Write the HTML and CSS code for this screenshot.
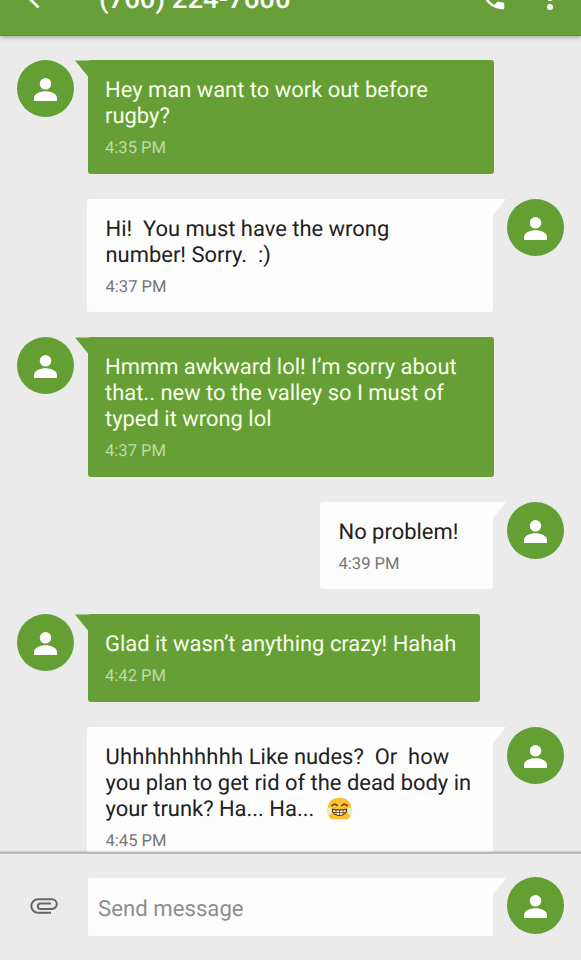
FILE: index.html
```html
<!DOCTYPE html>
<html lang="en">
<head>
    <meta charset="UTF-8">
    <title>Messages</title>
    <link rel="stylesheet" href="styles.css">
</head>
<body>
    <svg class="defs" width="0" height="0">
        <symbol id="person" viewBox="0 0 24 24">
            <circle cx="12" cy="6.1" r="6"/>
            <path d="M0 24v-3.2C0 16 6.5 13.7 12 13.7S24 16 24 20.8V24z"/>
        </symbol>
    </svg>
    <div class="app">
        <header class="toolbar">
            <svg class="back" width="24" height="24" viewBox="0 0 24 24"><path d="M12.5 2.5 3 12l9.5 9.5M3 12h20"/></svg>
            <h1>(760) 224-7600</h1>
            <svg class="phone" width="30" height="30" viewBox="0 0 24 24"><path d="M6.62 10.79c1.44 2.83 3.76 5.14 6.59 6.59l2.2-2.2c.27-.27.67-.36 1.02-.24 1.12.37 2.33.57 3.57.57.55 0 1 .45 1 1V20c0 .55-.45 1-1 1-9.39 0-17-7.61-17-17 0-.55.45-1 1-1h3.5c.55 0 1 .45 1 1 0 1.25.2 2.45.57 3.57.11.35.03.74-.25 1.02l-2.2 2.2z"/></svg>
            <svg class="more" width="8" height="26" viewBox="0 0 8 26"><circle cx="4" cy="4" r="3"/><circle cx="4" cy="13" r="3"/><circle cx="4" cy="22" r="3"/></svg>
        </header>

        <main class="messages">
            <div class="message received">
                <div class="avatar"><svg><use href="#person"/></svg></div>
                <div class="bubble">
                    <p>Hey man want to work out before<br>rugby?</p>
                    <time>4:35 PM</time>
                </div>
            </div>
            <div class="message sent">
                <div class="bubble">
                    <p>Hi!&nbsp; You must have the wrong<br>number! Sorry.&nbsp; :)</p>
                    <time>4:37 PM</time>
                </div>
                <div class="avatar"><svg><use href="#person"/></svg></div>
            </div>
            <div class="message received">
                <div class="avatar"><svg><use href="#person"/></svg></div>
                <div class="bubble">
                    <p>Hmmm awkward lol! I’m sorry about<br>that.. new to the valley so I must of<br>typed it wrong lol</p>
                    <time>4:37 PM</time>
                </div>
            </div>
            <div class="message sent">
                <div class="bubble short">
                    <p>No problem!</p>
                    <time>4:39 PM</time>
                </div>
                <div class="avatar"><svg><use href="#person"/></svg></div>
            </div>
            <div class="message received">
                <div class="avatar"><svg><use href="#person"/></svg></div>
                <div class="bubble medium">
                    <p>Glad it wasn’t anything crazy! Hahah</p>
                    <time>4:42 PM</time>
                </div>
            </div>
            <div class="message sent">
                <div class="bubble">
                    <p><span class="loose">Uhhhhhhhhhh</span> Like nudes?&nbsp; Or&nbsp; how<br>you plan to get rid of the dead body in<br>your trunk? Ha... Ha...&nbsp; <svg class="emoji" width="27" height="23" viewBox="0 0 27 23">
                        <path fill="#fbc02d" d="M1.5 13C1.500 5 6 .8 13.500.8S25.500 5 25.500 13c0 6-2.500 9.300-5 9.300h-14C4 22.300 1.500 19 1.500 13z"/>
                        <path fill="none" stroke="#5d3b12" stroke-width="1.500" stroke-linecap="round" d="M6 8.800q2.500-2.800 5.200-.3M16 8.500q2.700-2.500 5.200.3"/>
                        <path fill="#fff" stroke="#5d3b12" stroke-width="1.200" d="M6.300 12.300q7.200 1.200 14.400 0c.2 4-2.700 6.200-7.200 6.200s-7.400-2.200-7.200-6.200z"/>
                        <path fill="none" stroke="#5d3b12" stroke-width=".8" d="M10 13v5M13.500 13v5.500M17 13v5M7 15.500h13"/>
                        <path fill="#e7efc9" d="M5.500 10.500c-3-.5-5 1.500-5 4.300 0 2 1.200 3.200 2.600 3.200 2.400 0 2.600-3.500 2.400-7.500zM21.500 10.500c3-.5 5 1.500 5 4.300 0 2-1.200 3.200-2.600 3.200-2.400 0-2.600-3.500-2.400-7.500z"/>
                    </svg></p>
                    <time>4:45 PM</time>
                </div>
                <div class="avatar"><svg><use href="#person"/></svg></div>
            </div>
        </main>

        <footer class="composer">
            <svg class="clip" width="28" height="16" viewBox="0 0 28 16"><path d="M21 14.700H8A6.700 6.700 0 0 1 8 1.300h14a4.700 4.700 0 0 1 0 9.600H10.500a2.700 2.700 0 0 1 0-5.400H21"/></svg>
            <div class="field">Send message</div>
            <div class="avatar"><svg><use href="#person"/></svg></div>
        </footer>
    </div>
</body>
</html>
```

FILE: styles.css
```css
* {
    box-sizing: border-box;
}
body {
    margin: 0;
    font-family: Roboto, "Liberation Sans", sans-serif;
    text-rendering: geometricPrecision;
    background-color: #ebebeb;
}
.defs {
    display: block;
}
.app {
    display: flex;
    flex-direction: column;
    height: 960px;
    overflow: hidden;
}

/* toolbar, scrolled partly off the top */
.toolbar {
    display: flex;
    align-items: center;
    flex: none;
    height: 76px;
    margin-top: -40px;
    padding: 0 27px 0 26px;
    color: #fff;
    background-color: #679f38;
    border-bottom: 1px solid #5c9033;
    box-shadow: 0 1px 5px rgba(0, 0, 0, 0.35);
    z-index: 1;
}
.toolbar h1 {
    margin: 2px auto 0 49px;
    font-size: 27.5px;
    font-weight: 500;
    line-height: 32px;
    white-space: nowrap;
}
.toolbar svg {
    fill: #fff;
}
.toolbar .back {
    fill: none;
    stroke: #fff;
    stroke-width: 2.8;
}
.phone {
    margin-right: 38px;
}

.messages {
    display: flex;
    flex-direction: column;
    flex: 1;
    gap: 25px;
    min-height: 0;
    padding: 24.4px 17px 0;
    overflow: hidden;
}
.message {
    display: flex;
    flex: none;
    gap: 14px;
}
.sent {
    justify-content: flex-end;
}
.avatar {
    display: flex;
    flex: none;
    align-items: center;
    justify-content: center;
    width: 57px;
    height: 57px;
    padding-top: 2px;
    border-radius: 50%;
    background-color: #639f33;
}
.avatar svg {
    width: 23px;
    height: 23px;
    fill: #fff;
}
.bubble {
    position: relative;
    width: 406px;
    padding: 18px 17px 14.5px;
    border-radius: 3px;
    color: #f7ffe9;
    background-color: #659f36;
}
.sent .bubble {
    padding-left: 18.5px;
    color: #212121;
    background-color: #fdfdfd;
}
.sent .short {
    width: 173px;
}
.medium {
    width: 392px;
}
.bubble p {
    margin: 0;
    font-size: 21.95px;
    line-height: 26px;
    white-space: nowrap;
}
.bubble time {
    display: block;
    margin-top: 8px;
    font-size: 16.6px;
    line-height: 21px;
    color: #c0dba4;
}
.sent .bubble time {
    color: #757575;
}
/* speech tail pointing at the avatar */
.bubble::before,
.field::before {
    content: "";
    position: absolute;
    top: 0;
    left: -13px;
    width: 17px;
    height: 16px;
    background-color: inherit;
    clip-path: polygon(0 0, 100% 0, 100% 100%, 13px 100%);
}
.sent .bubble::before,
.field::before {
    left: auto;
    right: -13px;
    clip-path: polygon(0 0, 100% 0, 4px 100%, 0 100%);
}
.loose {
    letter-spacing: 0.25px;
}
.emoji {
    margin-left: 1px;
    vertical-align: -4px;
}

.composer {
    display: flex;
    flex: none;
    align-items: flex-start;
    height: 108px;
    padding: 23px 17px 0 30px;
    background-color: #ebebeb;
    border-top: 2px solid #b9b9b9;
    box-shadow: 0 -1px 1px rgba(0, 0, 0, 0.12);
    z-index: 1;
}
.clip {
    margin: 21px 30px 0 0;
    fill: none;
    stroke: #666;
    stroke-width: 2;
}
.field {
    position: relative;
    width: 405px;
    height: 58px;
    margin: 1px 14px 0 0;
    padding-left: 10px;
    border-radius: 2px;
    font-size: 22.2px;
    line-height: 62px;
    color: #8e8e8e;
    background-color: #fdfdfd;
}
```
